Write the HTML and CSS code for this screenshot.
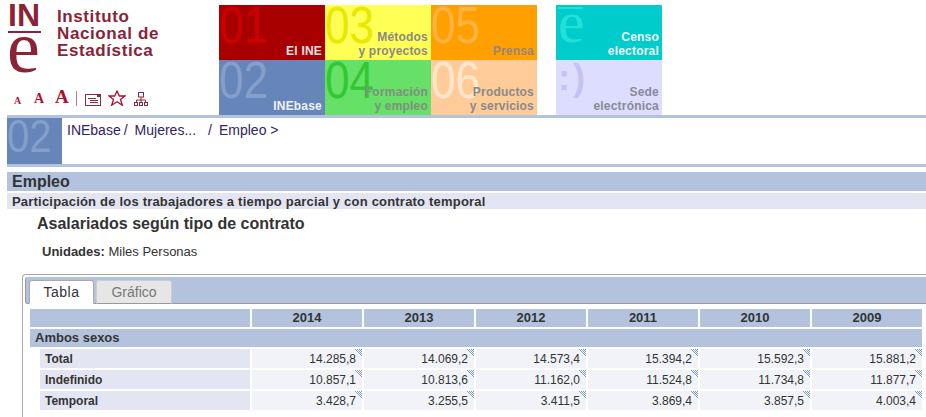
FILE: index.html
```html
<!DOCTYPE html>
<html>

<head>
    <title>Empleo - INEbase</title>
    <link rel="stylesheet" href="styles.css">
</head>

<body>
    <div class="top">
        <div class="brand">
            <div class="logo-row">
                <div class="logo">
                    <div class="logo-in">IN</div>
                    <div class="logo-rule"></div>
                    <div class="logo-e">e</div>
                </div>
                <div class="logo-name">Instituto<br>Nacional de<br>Estadística</div>
            </div>
            <div class="tools">
                <span class="size-a small">A</span>
                <span class="size-a medium">A</span>
                <span class="size-a large">A</span>
                <span class="tools-sep"></span>
                <svg class="tool mail" width="16" height="12" viewBox="0 0 16 12">
                    <rect x="0.5" y="0.5" width="15" height="11" fill="none" stroke="#8a2a3c"/>
                    <rect x="12" y="0" width="4" height="3" fill="#8a2a3c"/>
                    <path d="M3 4.500h8M5 6.500h8M5 8.500h8" stroke="#8a2a3c" fill="none"/>
                </svg>
                <svg class="tool star" width="18" height="16" viewBox="0 0 18 16">
                    <path d="M9 1l2.300 5h5.700l-4.500 3.500 1.800 5.700-5.300-3.400-5.300 3.400 1.800-5.700-4.500-3.500h5.700z" fill="none" stroke="#a81030" stroke-width="1.300"/>
                </svg>
                <svg class="tool tree" width="14" height="14" viewBox="0 0 14 14">
                    <path d="M7 5v5M2.500 10.500v-2.500h9v2.500" fill="none" stroke="#8a2a3c"/>
                    <rect x="4.500" y="0.500" width="5" height="4.500" fill="none" stroke="#8a2a3c"/>
                    <rect x="0.500" y="10.500" width="3" height="3" fill="none" stroke="#8a2a3c"/>
                    <rect x="5.500" y="10.500" width="3" height="3" fill="none" stroke="#8a2a3c"/>
                    <rect x="10.500" y="10.500" width="3" height="3" fill="none" stroke="#8a2a3c"/>
                </svg>
            </div>
        </div>

        <div class="tiles">
            <div class="tile t01"><span class="num">01</span><span class="tile-label">El INE</span></div>
            <div class="tile t03"><span class="num">03</span><span class="tile-label">Métodos<br>y proyectos</span></div>
            <div class="tile t05"><span class="num">05</span><span class="tile-label">Prensa</span></div>
            <div class="tile t02"><span class="num">02</span><span class="tile-label">INEbase</span></div>
            <div class="tile t04"><span class="num">04</span><span class="tile-label">Formación<br>y empleo</span></div>
            <div class="tile t06"><span class="num">06</span><span class="tile-label">Productos<br>y servicios</span></div>
        </div>

        <div class="side-tiles">
            <div class="tile censo"><span class="censo-macron"></span><span class="censo-mark">e</span><span class="tile-label">Censo<br>electoral</span></div>
            <div class="tile sede"><span class="sede-mark">:)</span><span class="tile-label">Sede<br>electrónica</span></div>
        </div>
    </div>

    <div class="content">
        <div class="crumb-bar">
            <div class="crumb-num"><span>02</span></div>
            <div class="crumbs">INEbase<span class="sep">/</span>Mujeres...<span class="sep far">/</span>Empleo &gt;</div>
        </div>

        <h1 class="section">Empleo</h1>
        <h2 class="subsection">Participación de los trabajadores a tiempo parcial y con contrato temporal</h2>
        <h3 class="title">Asalariados según tipo de contrato</h3>
        <p class="units"><b>Unidades:</b> Miles Personas</p>

        <div class="panel">
            <div class="tabs">
                <div class="tab active">Tabla</div>
                <div class="tab">Gráfico</div>
            </div>
            <div class="grid">
                <div class="head"></div>
                <div class="head year">2014</div>
                <div class="head year">2013</div>
                <div class="head year">2012</div>
                <div class="head year">2011</div>
                <div class="head year">2010</div>
                <div class="head year">2009</div>

                <div class="group">Ambos sexos</div>

                <div class="row-name">Total</div>
                <div class="val">14.285,8</div>
                <div class="val">14.069,2</div>
                <div class="val">14.573,4</div>
                <div class="val">15.394,2</div>
                <div class="val">15.592,3</div>
                <div class="val">15.881,2</div>

                <div class="row-name">Indefinido</div>
                <div class="val">10.857,1</div>
                <div class="val">10.813,6</div>
                <div class="val">11.162,0</div>
                <div class="val">11.524,8</div>
                <div class="val">11.734,8</div>
                <div class="val">11.877,7</div>

                <div class="row-name">Temporal</div>
                <div class="val">3.428,7</div>
                <div class="val">3.255,5</div>
                <div class="val">3.411,5</div>
                <div class="val">3.869,4</div>
                <div class="val">3.857,5</div>
                <div class="val">4.003,4</div>
            </div>
        </div>
    </div>
</body>

</html>
```
FILE: styles.css
```css
html, body {
    height: 417px;
    overflow: hidden;
}

body {
    margin: 0;
    background-color: #ffffff;
    font-family: "Liberation Sans", Arial, sans-serif;
    color: #333333;
}

.top {
    display: flex;
    height: 115px;
    padding-left: 7px;
}

.brand {
    width: 212px;
    display: flex;
    flex-direction: column;
}

.logo-row {
    display: flex;
    height: 90px;
}

.logo {
    width: 50px;
    padding-top: 4px;
    color: #8a2238;
}

.logo-in {
    width: 33px;
    height: 27px;
    padding-left: 1px;
    box-sizing: border-box;
    font-size: 32px;
    font-weight: bold;
    line-height: 23px;
}

.logo-rule {
    width: 33px;
    margin-left: 1px;
    height: 2px;
    background-color: #8a2238;
}

.logo-e {
    font-family: "Liberation Serif", serif;
    font-size: 74px;
    line-height: 28px;
    height: 28px;
    width: 33px;
}

.logo-name {
    padding-top: 8px;
    color: #8a2238;
    font-size: 17px;
    font-weight: bold;
    line-height: 17px;
    letter-spacing: 0.6px;
}

.tools {
    display: flex;
    align-items: flex-end;
    height: 16px;
    padding-left: 7px;
}

.size-a {
    font-family: "Liberation Serif", serif;
    font-weight: bold;
    color: #b01030;
    line-height: 1;
}

.small { font-size: 10px; width: 20px; }
.medium { font-size: 14px; width: 21px; }
.large { font-size: 19px; width: 21px; }

.tools-sep {
    width: 1px;
    height: 15px;
    background-color: #c87a88;
    margin-right: 8px;
}

.tool {
    margin-right: 7px;
}

.tree {
    margin-left: 1px;
}

.tiles {
    display: grid;
    grid-template-columns: repeat(3, 106px);
    grid-template-rows: 55px 55px;
    margin-top: 5px;
}

.side-tiles {
    display: grid;
    grid-template-rows: 55px 55px;
    width: 106px;
    margin-top: 5px;
    margin-left: 19px;
}

.tile {
    position: relative;
    overflow: hidden;
    text-align: right;
}

.num {
    position: absolute;
    left: 0;
    top: -6px;
    font-size: 52px;
    line-height: 52px;
    transform: scaleX(0.85);
    transform-origin: left top;
}

.tile-label {
    position: absolute;
    right: 3px;
    bottom: 2px;
    font-size: 12px;
    font-weight: bold;
    line-height: 14px;
    letter-spacing: 0.2px;
}

.t01 { background-color: #a80000; }
.t01 .num { color: #cc0000; }
.t01 .tile-label { color: #f4e4e4; }
.t02 { background-color: #6685b8; }
.t02 .num { color: #849fcb; }
.t02 .tile-label { color: #f0f2f8; }
.t03 { background-color: #ffff55; }
.t03 .num { color: #e8e800; }
.t03 .tile-label { color: #8a8a80; }
.t04 { background-color: #66e066; }
.t04 .num { color: #33c833; }
.t04 .tile-label { color: #808f80; }
.t05 { background-color: #ff9f00; }
.t05 .num { color: #ffb340; }
.t05 .tile-label { color: #99857a; }
.t06 { background-color: #ffcc99; }
.t06 .num { color: #ffe6cc; }
.t06 .tile-label { color: #8a8a88; }

.censo { background-color: #00cccc; }
.censo .tile-label { color: #f0fafa; }
.censo-macron {
    position: absolute;
    left: 2px;
    top: 2px;
    width: 25px;
    height: 2px;
    background-color: #22e0d8;
}
.censo-mark {
    position: absolute;
    left: 2px;
    top: -13px;
    color: #22e0d8;
    font-family: "Liberation Serif", serif;
    font-size: 60px;
    line-height: 60px;
}

.sede { background-color: #ddddff; }
.sede .tile-label { color: #8a8a98; }
.sede-mark {
    position: absolute;
    left: 2px;
    top: 0;
    color: #c4c4f4;
    font-size: 36px;
    font-weight: bold;
    line-height: 36px;
    letter-spacing: 3px;
}

.content {
    padding-left: 7px;
}

.crumb-bar {
    display: flex;
    height: 46px;
    border-top: 3px solid #b3c3de;
    border-bottom: 3px solid #b3c3de;
}

.crumb-num {
    width: 55px;
    background-color: #6685b8;
    color: #849fcb;
    font-size: 46px;
    line-height: 36px;
    overflow: hidden;
}

.crumb-num span {
    display: inline-block;
    transform: scaleX(0.87);
    transform-origin: left top;
}

.crumbs {
    padding: 4px 0 0 5px;
    font-size: 14px;
    line-height: 16px;
    color: #33235e;
}

.sep {
    margin: 0 7px 0 3px;
}

.sep.far {
    margin-left: 12px;
    margin-right: 7px;
}

.section {
    margin: 5px 0 2px;
    height: 19px;
    padding-left: 5px;
    background-color: #b3c3de;
    font-size: 16px;
    line-height: 19px;
}

.subsection {
    margin: 0;
    height: 16px;
    padding-left: 5px;
    background-color: #e3e6f2;
    font-size: 13px;
    line-height: 17px;
    letter-spacing: 0.2px;
}

.title {
    margin: 6px 0 0 30px;
    font-size: 16px;
    line-height: 18px;
}

.units {
    margin: 11px 0 0 35px;
    font-size: 13px;
    line-height: 16px;
}

.panel {
    margin: 14px 0 0 15px;
    width: 904px;
    height: 140px;
    padding-top: 2px;
    border-top: 1px solid #aaaaaa;
    border-left: 1px solid #aaaaaa;
    border-radius: 4px 0 0 0;
}

.tabs {
    display: flex;
    gap: 2px;
    height: 26px;
    margin-left: 2px;
    padding-left: 3px;
    background-color: #b3c3de;
    border-left: 1px solid #999999;
    border-bottom: 1px solid #999999;
    border-radius: 3px 0 0 3px;
    align-items: flex-end;
}

.tab {
    width: 76px;
    height: 24px;
    margin-bottom: -1px;
    background-color: #e6e6e6;
    border: 1px solid #c8cdd8;
    border-bottom: 1px solid #999999;
    border-radius: 3px 3px 0 0;
    color: #777777;
    font-size: 14px;
    line-height: 23px;
    text-align: center;
    box-sizing: border-box;
}

.tab.active {
    width: 65px;
    background-color: #ffffff;
    border-color: #aaaaaa;
    border-bottom-color: #ffffff;
    color: #333333;
    letter-spacing: 0.5px;
}

.grid {
    display: grid;
    grid-template-columns: 220px repeat(6, 110px);
    grid-template-rows: 18px 18px repeat(3, 19px);
    gap: 2px;
    margin: 5px 0 0 7px;
    font-size: 13px;
}

.head {
    background-color: #b3c3de;
}

.year {
    font-weight: bold;
    text-align: center;
    line-height: 18px;
}

.group {
    grid-column: 1 / -1;
    padding-left: 5px;
    background-color: #b3c3de;
    font-weight: bold;
    line-height: 18px;
}

.row-name {
    margin-left: 10px;
    padding-left: 5px;
    background-color: #e3e6f2;
    font-size: 12px;
    font-weight: bold;
    line-height: 20px;
}

.val {
    position: relative;
    padding-right: 6px;
    background-color: #f1f3f8;
    font-size: 12px;
    text-align: right;
    line-height: 20px;
}

.val::after {
    content: "";
    position: absolute;
    top: 0;
    right: 0;
    width: 8px;
    height: 8px;
    background: repeating-conic-gradient(#7f9bc8 0 25%, #ffffff 0 50%) 0 0 / 2px 2px;
    clip-path: polygon(0 0, 100% 0, 100% 100%);
}
```
